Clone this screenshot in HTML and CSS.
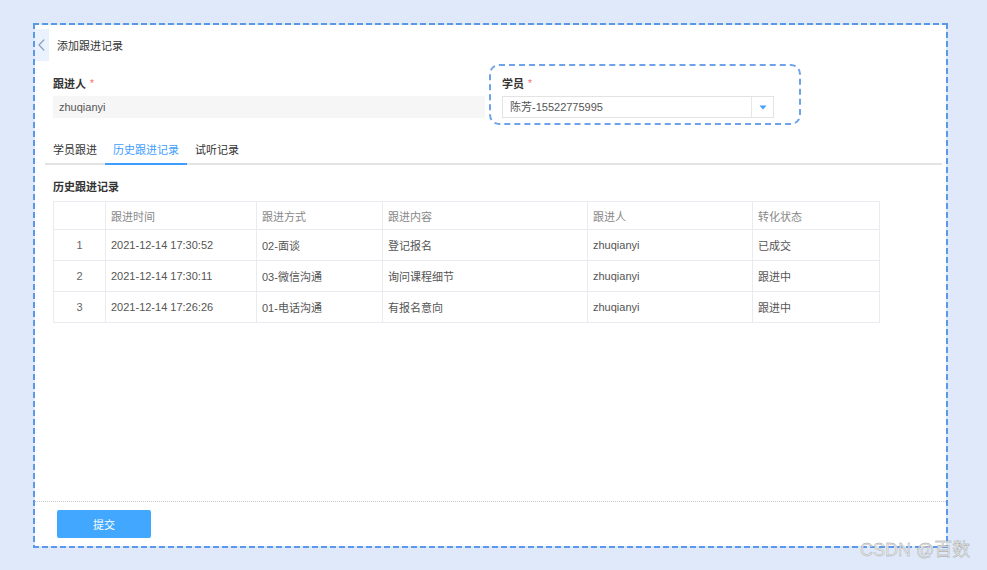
FILE: index.html
```html
<!DOCTYPE html>
<html lang="zh-CN">
<head>
<meta charset="utf-8">
<title>添加跟进记录</title>
<link rel="stylesheet" href="styles.css">
</head>
<body>
<div class="frame">
  <div class="panel">
    <div class="main">
      <div class="header">
        <button class="back" type="button" aria-label="返回">
          <svg width="14" height="32" viewBox="0 0 14 32"><path d="M8.8 11 L4 16 L8.8 21" fill="none" stroke="#8a9fbd" stroke-width="1.2" stroke-linecap="round" stroke-linejoin="round"/></svg>
        </button>
        <span class="title">添加跟进记录</span>
      </div>

      <div class="form-row">
        <div class="field field-left">
          <div class="label">跟进人<span class="req">*</span></div>
          <div class="input">zhuqianyi</div>
        </div>
        <div class="field field-right">
          <div class="label">学员<span class="req">*</span></div>
          <div class="select">
            <span class="select-value">陈芳-15522775995</span>
            <span class="select-arrow">
              <svg width="8" height="5" viewBox="0 0 8 5"><path d="M0.5 0.5 H7.5 L4 4.5 Z" fill="#409eff"/></svg>
            </span>
          </div>
          <div class="highlight"></div>
        </div>
      </div>

      <div class="tabs">
        <div class="tab">学员跟进</div>
        <div class="tab active">历史跟进记录</div>
        <div class="tab">试听记录</div>
      </div>

      <div class="section-title">历史跟进记录</div>

      <table class="grid">
        <colgroup>
          <col class="c-idx"><col class="c-time"><col class="c-way"><col class="c-content"><col class="c-person"><col class="c-status">
        </colgroup>
        <thead>
          <tr><th></th><th>跟进时间</th><th>跟进方式</th><th>跟进内容</th><th>跟进人</th><th>转化状态</th></tr>
        </thead>
        <tbody>
          <tr><td class="idx">1</td><td>2021-12-14 17:30:52</td><td>02-面谈</td><td>登记报名</td><td>zhuqianyi</td><td>已成交</td></tr>
          <tr><td class="idx">2</td><td>2021-12-14 17:30:11</td><td>03-微信沟通</td><td>询问课程细节</td><td>zhuqianyi</td><td>跟进中</td></tr>
          <tr><td class="idx">3</td><td>2021-12-14 17:26:26</td><td>01-电话沟通</td><td>有报名意向</td><td>zhuqianyi</td><td>跟进中</td></tr>
        </tbody>
      </table>
    </div>

    <div class="footer">
      <button class="submit" type="button">提交</button>
    </div>
  </div>
</div>
<div class="watermark">CSDN @百数</div>
</body>
</html>
```

FILE: styles.css
```css
* { box-sizing: border-box; }

html, body {
  margin: 0;
  padding: 0;
}

body {
  width: 987px;
  height: 570px;
  background: #dfe9f9;
  font-family: "Liberation Sans", "Noto Sans CJK SC", sans-serif;
  font-size: 11px;
  color: #333;
  position: relative;
  overflow: hidden;
  padding-top: 23px;
  padding-left: 33px;
}

.frame {
  width: 915px;
  height: 525px;
  padding: 2px;
  background:
    repeating-linear-gradient(90deg, #5b98ea 0 6px, transparent 6px 9px) top left / 100% 2px no-repeat,
    repeating-linear-gradient(90deg, #5b98ea 0 6px, transparent 6px 9px) bottom left / 100% 2px no-repeat,
    repeating-linear-gradient(180deg, #5b98ea 0 6px, transparent 6px 9px) top left / 2px 100% no-repeat,
    repeating-linear-gradient(180deg, #5b98ea 0 6px, transparent 6px 9px) top right / 2px 100% no-repeat;
}

.panel {
  width: 100%;
  height: 100%;
  background: #fff;
  display: flex;
  flex-direction: column;
}

.main {
  flex: 1;
  padding: 4px 4px 0 18px;
}

.header {
  display: flex;
  align-items: center;
  margin-left: -18px;
  height: 32px;
}

.back {
  width: 14px;
  height: 32px;
  padding: 0;
  border: none;
  background: #eaf2fd;
  display: flex;
  align-items: center;
  justify-content: center;
  cursor: pointer;
}

.title {
  margin-left: 8px;
  font-size: 11px;
  color: #333;
}

.form-row {
  display: flex;
  gap: 17px;
  margin-top: 13px;
}

.field { position: relative; }
.field-left { width: 432px; }
.field-right { width: 272px; }

.label {
  font-weight: bold;
  line-height: 18px;
  color: #333;
  margin-bottom: 4px;
  padding-top: 1px;
  height: 18px;
}

.req {
  color: #f56c6c;
  font-weight: normal;
  margin-left: 4px;
  font-size: 10px;
  position: relative;
  top: -1px;
}

.input {
  height: 22px;
  line-height: 22px;
  padding-left: 6px;
  background: #f6f6f6;
  color: #555;
}

.select {
  height: 22px;
  display: flex;
  border: 1px solid #e3e3e3;
  background: #fff;
}

.select-value {
  flex: 1;
  line-height: 20px;
  padding-left: 7px;
  color: #555;
}

.select-arrow {
  width: 22px;
  border-left: 1px solid #e8e8e8;
  display: flex;
  align-items: center;
  justify-content: center;
}

.highlight {
  position: absolute;
  top: -10px;
  left: -13px;
  right: -27px;
  bottom: -7px;
  border: 2px dashed #6ea2ea;
  border-radius: 10px;
  pointer-events: none;
}

.tabs {
  display: flex;
  margin-top: 18px;
  margin-left: -8px;
  border-bottom: 2px solid #e4e4e4;
  height: 29px;
}

.tab {
  padding: 0 8px;
  line-height: 28px;
  color: #333;
  margin-bottom: -2px;
  border-bottom: 2px solid transparent;
}

.tab.active {
  color: #409eff;
  border-bottom-color: #409eff;
}

.section-title {
  font-weight: bold;
  line-height: 16px;
  margin-top: 14px;
  color: #333;
}

.grid {
  margin-top: 6px;
  width: 826px;
  border-collapse: collapse;
  table-layout: fixed;
  border: 1px solid #e6e8ed;
}

.c-idx { width: 52px; }
.c-time { width: 151px; }
.c-way { width: 126px; }
.c-content { width: 205px; }
.c-person { width: 165px; }
.c-status { width: 127px; }

.grid th,
.grid td {
  border: 1px solid #e9ebf0;
  padding: 0 5px;
  text-align: left;
  white-space: nowrap;
}

.grid th {
  height: 28px;
  font-weight: normal;
  color: #888;
}

.grid td {
  height: 31px;
  color: #555;
}

.grid td.idx {
  text-align: center;
  color: #666;
}

.footer {
  height: 45px;
  border-top: 1px dotted #c9c9c9;
  padding: 8px 0 8px 22px;
}

.submit {
  width: 94px;
  height: 28px;
  border: none;
  border-radius: 2px;
  background: #42a8ff;
  color: #fff;
  font-family: inherit;
  font-size: 11px;
  padding: 0;
  cursor: pointer;
}

.watermark {
  position: absolute;
  left: 860px;
  top: 538px;
  font-size: 18px;
  line-height: 24px;
  color: #e6e6e6;
  -webkit-text-stroke: 0.3px #9a9a9a;
  white-space: nowrap;
}
```
